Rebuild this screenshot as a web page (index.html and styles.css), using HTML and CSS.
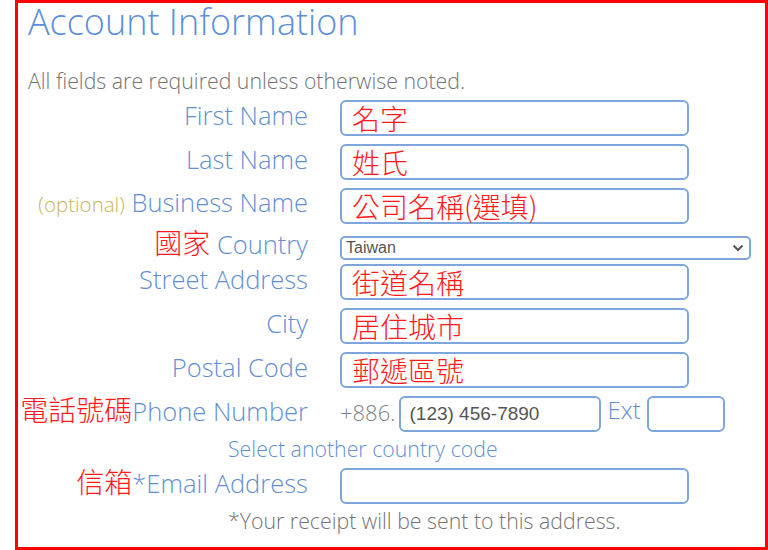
FILE: index.html
```html
<!DOCTYPE html>
<html lang="zh-Hant">
<head>
  <meta charset="UTF-8" />
  <title>Account Information</title>
  <link rel="stylesheet" href="styles.css">
</head>
<body>

  <div class="frame">
    <h2 class="title">Account Information</h2>
    <p class="note">All fields are required unless otherwise noted.</p>

    <div class="form">
      <div class="row">
        <label class="label">First Name</label>
        <div class="field"><div class="input wide"><span class="zh">名字</span></div></div>
      </div>

      <div class="row">
        <label class="label">Last Name</label>
        <div class="field"><div class="input wide"><span class="zh">姓氏</span></div></div>
      </div>

      <div class="row">
        <label class="label"><span class="optional">(optional)</span> Business Name</label>
        <div class="field"><div class="input wide"><span class="zh">公司名稱(選填)</span></div></div>
      </div>

      <div class="row country">
        <label class="label"><span class="zh">國家</span> Country</label>
        <div class="field">
          <div class="select">
            <span>Taiwan</span>
            <svg width="12" height="8" viewBox="0 0 12 8"><path d="M1.5 1.5 L6 6 L10.5 1.5" fill="none" stroke="#555" stroke-width="2"/></svg>
          </div>
        </div>
      </div>

      <div class="row">
        <label class="label">Street Address</label>
        <div class="field"><div class="input wide"><span class="zh">街道名稱</span></div></div>
      </div>

      <div class="row">
        <label class="label">City</label>
        <div class="field"><div class="input wide"><span class="zh">居住城市</span></div></div>
      </div>

      <div class="row">
        <label class="label">Postal Code</label>
        <div class="field"><div class="input wide"><span class="zh">郵遞區號</span></div></div>
      </div>

      <div class="row">
        <label class="label"><span class="zh">電話號碼</span>Phone Number</label>
        <div class="field phone">
          <span class="prefix">+886.</span>
          <div class="input tel"><span class="num">(123) 456-7890</span></div>
          <span class="ext">Ext</span>
          <div class="input small"></div>
        </div>
      </div>

      <p class="help blue">Select another country code</p>

      <div class="row">
        <label class="label"><span class="zh">信箱</span>*Email Address</label>
        <div class="field"><div class="input wide"></div></div>
      </div>

      <p class="help">*Your receipt will be sent to this address.</p>
    </div>
  </div>

</body>
</html>
```

FILE: styles.css
```css
body {
  margin: 0;
  background: #fff;
  font-family: "Open Sans", "Noto Sans", sans-serif;
  font-weight: 300;
}

.frame {
  box-sizing: border-box;
  margin-left: 15px;
  height: 550px;
  border: 3px solid #ff0000;
}

.title {
  margin: -3px 0 0;
  padding-left: 10px;
  font-size: 36px;
  font-weight: 300;
  line-height: 44px;
  color: #5b8fdb;
}

.note {
  margin: 25px 0 0;
  padding-left: 10px;
  font-size: 21.3px;
  line-height: 24px;
  color: #737373;
}

.form {
  margin-top: 7px;
}

.row {
  display: grid;
  grid-template-columns: 290px 1fr;
  column-gap: 32px;
  align-items: center;
  height: 36px;
  margin-bottom: 8px;
}

.row.country {
  height: 28px;
  margin-bottom: 4px;
}

.row.country .label {
  line-height: 28px;
}

.row.country .field {
  align-self: end;
}

.label {
  text-align: right;
  font-size: 25.5px;
  line-height: 36px;
  margin-top: -6px;
  color: #628fd3;
  white-space: nowrap;
}

.zh {
  font-family: "Noto Sans CJK TC", "Noto Sans", sans-serif;
  font-weight: 300;
  font-size: 28px;
  line-height: 28px;
  color: #ff1a1a;
}

.optional {
  font-size: 20.5px;
  color: #c8b35a;
}

.field {
  display: flex;
  align-items: center;
}

.input {
  box-sizing: border-box;
  height: 36px;
  border: 2px solid #7ea6dc;
  border-radius: 6px;
  display: flex;
  align-items: center;
  padding-left: 10px;
}

.input.wide {
  width: 349px;
}

.select {
  box-sizing: border-box;
  width: 411px;
  height: 24px;
  border: 2px solid #7ea6dc;
  border-radius: 5px;
  display: flex;
  align-items: center;
  justify-content: space-between;
  padding: 0 5px 0 4px;
  font-family: "Liberation Sans", Arial, sans-serif;
  font-weight: 400;
  font-size: 16px;
  color: #555;
}

.phone .prefix {
  font-size: 22px;
  color: #808080;
  margin: -5px 4px 0 0;
}

.input.tel {
  width: 202px;
  padding-left: 8px;
}

.num {
  font-family: "Liberation Sans", Arial, sans-serif;
  font-weight: 400;
  font-size: 19px;
  color: #555;
}

.phone .ext {
  font-size: 24px;
  color: #628fd3;
  margin: -10px 6px 0 6px;
}

.input.small {
  width: 78px;
}

.help {
  margin: 0 0 10px;
  padding-left: 210px;
  font-size: 21.3px;
  line-height: 18px;
  color: #737373;
}

.help.blue {
  color: #628fd3;
}
```
